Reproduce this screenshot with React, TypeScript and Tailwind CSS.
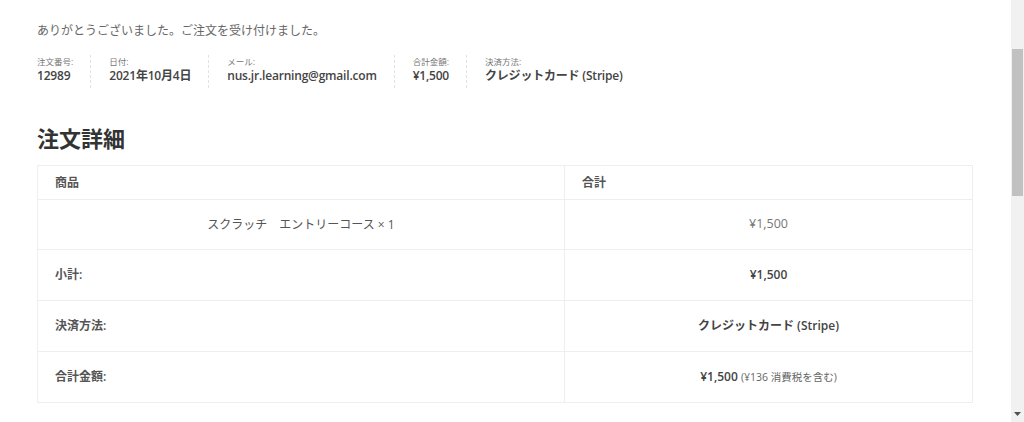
const font = { fontFamily: '"Open Sans", "Noto Sans CJK JP", sans-serif' };

const meta = [
  { label: "注文番号:", value: "12989" },
  { label: "日付:", value: "2021年10月4日" },
  { label: "メール:", value: "nus.jr.learning@gmail.com" },
  { label: "合計金額:", value: "¥1,500" },
  { label: "決済方法:", value: "クレジットカード (Stripe)" },
];

export default function App() {
  return (
    <div className="flex h-[422px] w-[1024px] overflow-hidden bg-white text-[#555]" style={font}>
      <main className="flex-1 px-[37px] pt-[22px]">
        <p className="text-[12px] leading-[18px] text-[#666]">
          ありがとうございました。ご注文を受け付けました。
        </p>

        <ul className="mt-[15px] flex">
          {meta.map((m, i) => (
            <li
              key={m.label}
              className={`flex flex-col pb-[4px] ${i === 0 ? "pr-[17px]" : "pl-[18px] pr-[17px]"} ${
                i < meta.length - 1 ? "border-r border-dashed border-[#e2e2e2]" : ""
              }`}
            >
              <span className="text-[8.5px] leading-[13px] text-[#777]">{m.label}</span>
              <span className="text-[12px] leading-[16px] font-semibold tracking-[-0.2px] text-[#444]">
                {m.value}
              </span>
            </li>
          ))}
        </ul>

        <h2 className="mt-[35px] text-[22px] leading-[30px] font-bold text-[#333]">注文詳細</h2>

        <table className="mt-[12px] w-[936px] border-collapse border border-[#eee] text-[12px]">
          <thead>
            <tr className="h-[34px]">
              <th className="w-[527px] border border-[#eee] pl-[17px] text-left font-semibold text-[#555]">商品</th>
              <th className="border border-[#eee] pl-[17px] text-left font-semibold text-[#555]">合計</th>
            </tr>
          </thead>
          <tbody>
            <tr className="h-[50px]">
              <td className="border border-[#eee] text-center text-[12px] text-[#555]">
                スクラッチ　エントリーコース × 1
              </td>
              <td className="border border-[#eee] text-center text-[12.5px] text-[#777]">¥1,500</td>
            </tr>
            <tr className="h-[51px]">
              <th className="border border-[#eee] pl-[17px] text-left font-semibold">小計:</th>
              <td className="border border-[#eee] text-center text-[12px] font-semibold text-[#444]">¥1,500</td>
            </tr>
            <tr className="h-[51px]">
              <th className="border border-[#eee] pl-[17px] text-left font-semibold">決済方法:</th>
              <td className="border border-[#eee] text-center text-[12px] font-semibold text-[#444]">
                クレジットカード (Stripe)
              </td>
            </tr>
            <tr className="h-[51px]">
              <th className="border border-[#eee] pl-[17px] text-left font-semibold">合計金額:</th>
              <td className="border border-[#eee] text-center text-[12px] font-semibold text-[#444]">
                ¥1,500 <small className="text-[10.5px] font-normal text-[#666]">(¥136 消費税を含む)</small>
              </td>
            </tr>
          </tbody>
        </table>
      </main>

      <div className="flex w-[13px] flex-col bg-[#f1f1f1]">
        <div className="mx-[1px] mt-[49px] h-[147px] bg-[#c1c1c1]" />
        <div className="flex-1" />
        <div className="mb-[6px] flex justify-center">
          <svg width="7" height="4" viewBox="0 0 7 4">
            <path d="M0 0h7L3.5 4z" fill="#505050" />
          </svg>
        </div>
      </div>
    </div>
  );
}
